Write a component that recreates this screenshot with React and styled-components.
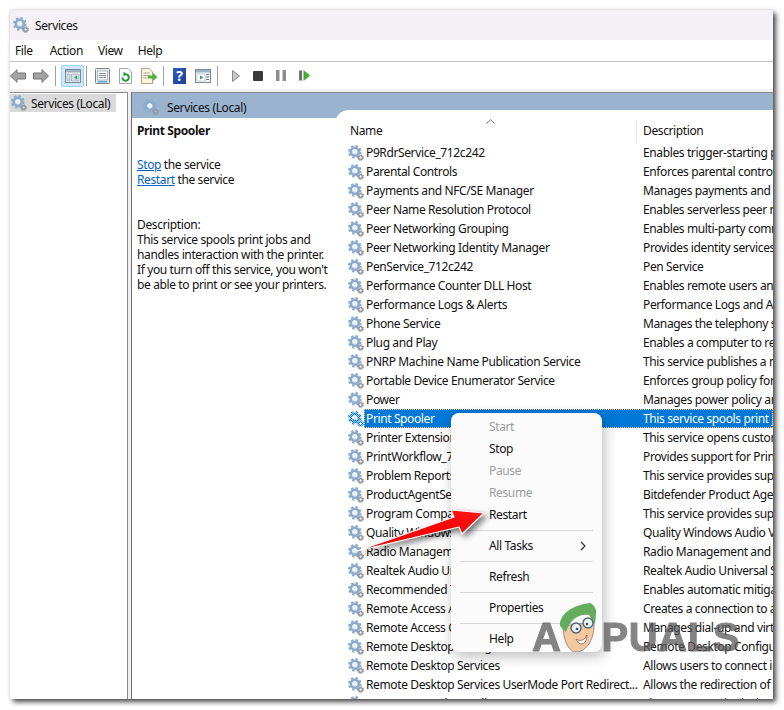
import React from 'react';
import styled, { createGlobalStyle } from 'styled-components';

const services = [
  ['P9RdrService_712c242', 'Enables trigger-starting processes'],
  ['Parental Controls', 'Enforces parental controls'],
  ['Payments and NFC/SE Manager', 'Manages payments and NFC'],
  ['Peer Name Resolution Protocol', 'Enables serverless peer name'],
  ['Peer Networking Grouping', 'Enables multi-party communication'],
  ['Peer Networking Identity Manager', 'Provides identity services'],
  ['PenService_712c242', 'Pen Service'],
  ['Performance Counter DLL Host', 'Enables remote users and'],
  ['Performance Logs & Alerts', 'Performance Logs and Alerts'],
  ['Phone Service', 'Manages the telephony state'],
  ['Plug and Play', 'Enables a computer to recognize'],
  ['PNRP Machine Name Publication Service', 'This service publishes a machine'],
  ['Portable Device Enumerator Service', 'Enforces group policy for'],
  ['Power', 'Manages power policy and'],
  ['Print Spooler', 'This service spools print jobs'],
  ['Printer Extensions and Notifications', 'This service opens custom'],
  ['PrintWorkflow_712c242', 'Provides support for Print'],
  ['Problem Reports Control Panel Support', 'This service provides support'],
  ['ProductAgentService', 'Bitdefender Product Agent'],
  ['Program Compatibility Assistant Service', 'This service provides support'],
  ['Quality Windows Audio Video Experience', 'Quality Windows Audio Video'],
  ['Radio Management Service', 'Radio Management and'],
  ['Realtek Audio Universal Service', 'Realtek Audio Universal Service'],
  ['Recommended Troubleshooting Service', 'Enables automatic mitigation'],
  ['Remote Access Auto Connection Manager', 'Creates a connection to a'],
  ['Remote Access Connection Manager', 'Manages dial-up and virtual'],
  ['Remote Desktop Configuration', 'Remote Desktop Configuration'],
  ['Remote Desktop Services', 'Allows users to connect interactively'],
  ['Remote Desktop Services UserMode Port Redirect...', 'Allows the redirection of printers'],
  ['Remote Procedure Call (RPC)', 'The RPCSS service is the'],
];

const Gear = ({ selected, id }) => {
  const big = selected ? `url(#${id})` : '#8dabca';
  const small = selected ? `url(#${id})` : '#949aa2';
  return (
    <GearSvg viewBox="0 0 16 16">
      {selected && (
        <defs>
          <pattern id={id} width="2" height="2" patternUnits="userSpaceOnUse">
            <rect width="2" height="2" fill="#9cc9ee" />
            <rect width="1" height="1" fill="#0078d7" />
            <rect x="1" y="1" width="1" height="1" fill="#0078d7" />
          </pattern>
        </defs>
      )}
      <circle cx="6.8" cy="6.8" r="5.7" fill="none" stroke={big} strokeWidth="2.2" strokeDasharray="2.4 2.08" />
      <circle cx="6.8" cy="6.8" r="3.9" fill="none" stroke={big} strokeWidth="2.8" />
      <circle cx="6.8" cy="6.8" r="2.6" fill={selected ? '#e6f1fb' : '#edf3f9'} />
      <path d="M4.6 8a2.6 2.6 0 0 0 3.6 1" fill="none" stroke={selected ? '#0078d7' : '#b4c7da'} strokeWidth="0.8" />
      <circle cx="12.6" cy="12.6" r="1.9" fill="none" stroke={small} strokeWidth="1.6" />
      <circle cx="12.6" cy="12.6" r="3" fill="none" stroke={small} strokeWidth="1" strokeDasharray="1.2 1.15" />
    </GearSvg>
  );
};

const ArrowLeft = () => (
  <ToolSvg $w={16} viewBox="0 0 16 14">
    <path d="M0.5 7 L7 0.7 V4 H15.5 V10 H7 V13.3 Z" fill="#a3a3a3" stroke="#747474" />
  </ToolSvg>
);

const ArrowRight = () => (
  <ToolSvg $w={16} viewBox="0 0 16 14">
    <path d="M15.5 7 L9 0.7 V4 H0.5 V10 H9 V13.3 Z" fill="#a3a3a3" stroke="#747474" />
  </ToolSvg>
);

const PanelIcon = ({ inner }) => (
  <ToolSvg $w={16} viewBox="0 0 16 14">
    <rect x="0.5" y="0.5" width="15" height="13" fill="#f6f6f6" stroke="#7d8a96" />
    <rect x="1" y="1" width="14" height="2.5" fill="#9fb2c4" />
    {inner}
  </ToolSvg>
);

const SheetIcon = () => (
  <ToolSvg $w={15} viewBox="0 0 15 16">
    <rect x="0.5" y="0.5" width="14" height="15" rx="1" fill="#eceff2" stroke="#7d8288" />
    <rect x="2.5" y="3" width="10" height="9" fill="#fff" stroke="#9aa4ad" strokeWidth="0.8" />
    <path d="M4 5.5h7M4 7.5h7M4 9.5h7" stroke="#7f8a94" strokeWidth="0.9" />
    <rect x="3" y="13" width="9" height="1.5" fill="#5aa7e0" />
  </ToolSvg>
);

const RefreshIcon = () => (
  <ToolSvg $w={13} viewBox="0 0 13 16">
    <path d="M0.5 0.5H9L12.5 4V15.5H0.5Z" fill="#fbfbfb" stroke="#a5a5a5" />
    <path d="M3.4 9.5a3.2 3.2 0 1 0 3.2-3.2" fill="none" stroke="#1f9c3c" strokeWidth="2" />
    <path d="M4.5 3.8L8 6.3L4.5 8.6Z" fill="#1f9c3c" />
  </ToolSvg>
);

const ExportIcon = () => (
  <ToolSvg $w={17} viewBox="0 0 17 16">
    <path d="M0.5 0.5H8L11.5 4V15.5H0.5Z" fill="#fdf6dc" stroke="#a8a08a" />
    <path d="M2.5 5h6M2.5 7.5h6M2.5 10h4" stroke="#6d6d6d" strokeWidth="0.9" strokeDasharray="1 0.6" />
    <path d="M7 7.5H12V5L16.5 9L12 13V10.5H7Z" fill="#52b33a" />
  </ToolSvg>
);

const ResumeIcon = () => (
  <ToolSvg $w={11} viewBox="0 0 11 11">
    <rect x="0" y="0.5" width="3" height="10" fill="#6f6f6f" />
    <path d="M4.5 0L11 5.5L4.5 11Z" fill="#3dae2b" />
  </ToolSvg>
);

const Mascot = () => (
  <MascotSvg viewBox="0 0 40 50">
    <path d="M4 24 C4 40 11 50 17 50 C28 50 36 36 35 20 Z" fill="#f4c9a0" stroke="#7a7a7a" strokeWidth="0.8" />
    <path d="M1 24 C0 12 14 3 31 1 C35 3 38 7 37 12 L36 22 L30 13 C22 12 12 15 7 30 Z" fill="#63ad5c" />
    <circle cx="17" cy="26" r="5" fill="#e8f2f7" stroke="#50646f" strokeWidth="1.4" />
    <circle cx="29" cy="21" r="5" fill="#e8f2f7" stroke="#50646f" strokeWidth="1.4" />
    <circle cx="18" cy="27" r="1.3" fill="#36576b" />
    <circle cx="28" cy="22" r="1.3" fill="#36576b" />
    <path d="M17 37 C21 40 26 38 28 33 C28 43 20 45 17 37Z" fill="#fff" stroke="#8a4a35" strokeWidth="0.8" />
  </MascotSvg>
);

const RedArrow = () => (
  <ArrowSvg viewBox="0 0 140 50">
    <defs>
      <linearGradient id="redFade" x1="0" y1="1" x2="1" y2="0">
        <stop offset="0" stopColor="#e01010" />
        <stop offset="0.6" stopColor="#f00" />
        <stop offset="1" stopColor="#ff1a1a" />
      </linearGradient>
    </defs>
    <path d="M2 45 L99 11 L96 4 L129 7 L107 28 L104 21 Z" fill="url(#redFade)" stroke="#fff" strokeWidth="1.2" strokeLinejoin="round" />
  </ArrowSvg>
);

export default function App() {
  return (
    <Page>
      <GlobalStyle />
      <Window>
        <TitleBar>
          <Gear />
          <span>Services</span>
        </TitleBar>
        <MenuBar>
          <span>File</span>
          <span>Action</span>
          <span>View</span>
          <span>Help</span>
        </MenuBar>
        <Toolbar>
          <ToolGroup $gap={7}>
            <ArrowLeft />
            <ArrowRight />
          </ToolGroup>
          <ToolSep $l={6} $r={5} />
          <ActiveTool>
            <PanelIcon inner={<><path d="M2 5h3v7H2zM6.5 5h7.5v7H6.5z" fill="#cfe0ef" stroke="#7d8a96" strokeWidth="0.5" /><path d="M12 6.5v4l-3-2z" fill="#2aa23a" /></>} />
          </ActiveTool>
          <ToolSep $l={2} $r={8} />
          <ToolGroup $gap={9}>
            <SheetIcon />
            <RefreshIcon />
            <ExportIcon />
          </ToolGroup>
          <ToolSep $l={5} $r={9} />
          <ToolGroup $gap={9}>
            <HelpBox>?</HelpBox>
            <PanelIcon inner={<><path d="M2 5h8v7H2z" fill="#fff" stroke="#9aa4ad" strokeWidth="0.5" /><path d="M5 6.5v4l3-2z" fill="#2aa23a" /><path d="M11 5.5h3M11 8h3M11 10.5h3" stroke="#5a7fa6" strokeWidth="1.2" /></>} />
          </ToolGroup>
          <ToolSep $l={6} $r={14} />
          <ToolGroup $gap={13}>
            <ToolSvg $w={8} viewBox="0 0 8 12"><path d="M0.5 0.5L7.5 6L0.5 11.5Z" fill="#c8c8c8" stroke="#8a8a8a" /></ToolSvg>
            <StopSquare />
            <ToolSvg $w={10} viewBox="0 0 10 11"><rect width="3.5" height="11" fill="#8d8d8d" /><rect x="6.5" width="3.5" height="11" fill="#8d8d8d" /></ToolSvg>
            <ResumeIcon />
          </ToolGroup>
        </Toolbar>
        <Body>
          <TreePane>
            <TreeItem>
              <Gear />
              <span>Services (Local)</span>
            </TreeItem>
          </TreePane>
          <MainPane>
            <PaneHeader>
              <Gear />
              <span>Services (Local)</span>
            </PaneHeader>
            <PaneContent>
              <Details>
                <DetailTitle>Print Spooler</DetailTitle>
                <DetailActions>
                  <div><DetailLink>Stop</DetailLink> the service</div>
                  <div><DetailLink>Restart</DetailLink> the service</div>
                </DetailActions>
                <div>Description:</div>
                <div>
                  This service spools print jobs and<br />
                  handles interaction with the printer.<br />
                  If you turn off this service, you won't<br />
                  be able to print or see your printers.
                </div>
              </Details>
              <List>
                <ListHeader>
                  <NameHeader>
                    Name
                    <SortCaret viewBox="0 0 9 5"><path d="M0.5 4.5L4.5 0.8L8.5 4.5" fill="none" stroke="#777" /></SortCaret>
                  </NameHeader>
                  <DescHeader>Description</DescHeader>
                </ListHeader>
                {services.map(([name, desc], i) => {
                  const selected = name === 'Print Spooler';
                  return (
                    <Row key={name}>
                      <Gear selected={selected} id={`dither-${i}`} />
                      <RowBody $selected={selected}>
                        <NameCell>{name}</NameCell>
                        <DescCell>{desc}</DescCell>
                      </RowBody>
                    </Row>
                  );
                })}
              </List>
            </PaneContent>
          </MainPane>
        </Body>

        <ContextMenu>
          <MenuItem $disabled>Start</MenuItem>
          <MenuItem>Stop</MenuItem>
          <MenuItem $disabled>Pause</MenuItem>
          <MenuItem $disabled>Resume</MenuItem>
          <MenuItem>Restart</MenuItem>
          <MenuSep />
          <MenuItem>
            All Tasks
            <SubCaret viewBox="0 0 6 10"><path d="M1 1L5 5L1 9" fill="none" stroke="#333" strokeWidth="1.2" /></SubCaret>
          </MenuItem>
          <MenuSep />
          <MenuItem>Refresh</MenuItem>
          <MenuSep />
          <MenuItem>Properties</MenuItem>
          <MenuSep />
          <MenuItem>Help</MenuItem>
        </ContextMenu>
        <RedArrow />
        <Watermark>
          <WatermarkText>A</WatermarkText>
          <Mascot />
          <WatermarkText>PUALS</WatermarkText>
        </Watermark>
      </Window>
    </Page>
  );
}

const GlobalStyle = createGlobalStyle`
  html, body {
    margin: 0;
    padding: 0;
    background: #fff;
  }
`;

const Page = styled.div`
  width: 784px;
  height: 710px;
  padding: 10px 11px 11px 10px;
  box-sizing: border-box;
  overflow: hidden;
  font-family: "Noto Sans", sans-serif;
  font-size: 12px;
  letter-spacing: -0.38px;
  color: #111;
`;

const Window = styled.div`
  position: relative;
  height: 689px;
  display: flex;
  flex-direction: column;
  background: #f0f0f0;
  box-shadow: 3px 3px 5px rgba(0, 0, 0, 0.7), 0 0 3px rgba(0, 0, 0, 0.12);
`;

const TitleBar = styled.div`
  height: 30px;
  flex: none;
  display: flex;
  align-items: center;
  gap: 6px;
  padding-left: 3px;
  background: #f3f0f6;
  font-size: 12px;
`;

const MenuBar = styled.div`
  height: 22px;
  flex: none;
  display: flex;
  align-items: center;
  gap: 15px;
  padding-left: 5px;
  background: #fff;
  border-bottom: 1px solid #c4c4c4;
  box-sizing: border-box;

  span:first-child {
    margin-right: 2px;
  }
`;

const Toolbar = styled.div`
  height: 27px;
  flex: none;
  display: flex;
  align-items: center;
  background: #fff;
`;

const ToolSvg = styled.svg`
  width: ${(p) => p.$w}px;
  flex: none;
`;

const ToolSep = styled.div`
  width: 1px;
  height: 20px;
  flex: none;
  margin: 0 ${(p) => p.$r}px 0 ${(p) => p.$l}px;
  background: #a0a0a0;
`;

const ActiveTool = styled.div`
  width: 23px;
  height: 22px;
  flex: none;
  display: flex;
  align-items: center;
  justify-content: center;
  box-sizing: border-box;
  background: #cce8ff;
  border: 1px solid #99d1ff;
  border-radius: 2px;
`;

const ToolGroup = styled.div`
  display: flex;
  align-items: center;
  gap: ${(p) => p.$gap}px;
`;

const StopSquare = styled.div`
  width: 10px;
  height: 10px;
  background: #3a3a3a;
  border-radius: 1px;
`;

const HelpBox = styled.div`
  width: 13px;
  height: 16px;
  display: flex;
  align-items: center;
  justify-content: center;
  background: linear-gradient(135deg, #2f5cc0, #1d3f94);
  color: #fff;
  font-size: 14px;
  font-weight: 700;
  letter-spacing: 0;
`;

const Body = styled.div`
  flex: 1;
  min-height: 0;
  display: flex;
  gap: 3px;
  padding-top: 3px;
`;

const TreePane = styled.div`
  width: 118px;
  flex: none;
  box-sizing: border-box;
  background: #fff;
  border-top: 1px solid #8a8a8a;
  border-right: 1px solid #8a8a8a;
  padding-top: 1px;
`;

const TreeItem = styled.div`
  width: 106px;
  height: 18px;
  display: flex;
  align-items: center;
  gap: 4px;
  padding-left: 1px;
  box-sizing: border-box;
  background: #d9d9d9;
`;

const MainPane = styled.div`
  flex: 1;
  min-width: 0;
  display: flex;
  flex-direction: column;
  background: #fff;
  border-left: 1px solid #6e6e6e;
  border-top: 1px solid #8a8a8a;
`;

const PaneHeader = styled.div`
  height: 25px;
  flex: none;
  display: flex;
  align-items: center;
  gap: 8px;
  padding: 3px 0 0 11px;
  box-sizing: border-box;
  background: #9ab4d0;
`;

const PaneContent = styled.div`
  flex: 1;
  min-height: 0;
  display: flex;
`;

const Details = styled.div`
  width: 203px;
  flex: none;
  padding: 5px 0 0 5px;
  box-sizing: border-box;
  line-height: 15px;
`;

const DetailTitle = styled.div`
  font-weight: 700;
  height: 34px;
`;

const DetailActions = styled.div`
  height: 60px;
`;

const DetailLink = styled.a`
  color: #0563c1;
  text-decoration: underline;
`;

const List = styled.div`
  flex: 1;
  min-width: 0;
  margin-top: -8px;
  background: #fff;
  border-top-left-radius: 14px;
  overflow: hidden;
  position: relative;
  z-index: 1;
`;

const ListHeader = styled.div`
  height: 33px;
  display: flex;
  align-items: flex-end;
`;

const NameHeader = styled.div`
  position: relative;
  width: 287px;
  height: 23px;
  margin-left: 15px;
  padding-top: 2px;
  box-sizing: border-box;
  border-right: 1px solid #e5e5e5;
`;

const SortCaret = styled.svg`
  position: absolute;
  left: 136px;
  top: -1px;
  width: 9px;
  height: 5px;
`;

const DescHeader = styled.div`
  height: 23px;
  padding: 2px 0 0 6px;
  box-sizing: border-box;
`;

const Row = styled.div`
  height: 19px;
  display: flex;
  align-items: center;
  padding-left: 13px;
  white-space: nowrap;
`;

const GearSvg = styled.svg`
  width: 16px;
  height: 16px;
  flex: none;
`;

const RowBody = styled.div`
  flex: 1;
  min-width: 0;
  height: 19px;
  display: flex;
  align-items: center;
  padding-left: 2px;
  background: ${(p) => (p.$selected ? '#0078d7' : 'transparent')};
  color: ${(p) => (p.$selected ? '#fff' : 'inherit')};
  outline: ${(p) => (p.$selected ? '1px dotted #ffc77a' : 'none')};
  outline-offset: -1px;
`;

const NameCell = styled.div`
  width: 277px;
  flex: none;
`;

const DescCell = styled.div`
  flex: 1;
`;

const ContextMenu = styled.div`
  position: absolute;
  left: 441px;
  top: 403px;
  width: 151px;
  z-index: 3;
  padding: 3px 0 2px;
  box-sizing: border-box;
  background: #fbfbfb;
  border-radius: 8px;
  box-shadow: 2px 4px 14px rgba(0, 0, 0, 0.28);
`;

const MenuItem = styled.div`
  position: relative;
  height: 22px;
  line-height: 22px;
  padding-left: 38px;
  color: ${(p) => (p.$disabled ? '#9d9d9d' : '#111')};
`;

const SubCaret = styled.svg`
  position: absolute;
  right: 16px;
  top: 6px;
  width: 6px;
  height: 10px;
`;

const MenuSep = styled.div`
  height: 1px;
  margin: 4px 9px;
  background: #d6d6d6;
`;

const ArrowSvg = styled.svg`
  position: absolute;
  left: 345px;
  top: 496px;
  width: 140px;
  height: 50px;
  z-index: 4;
  filter: drop-shadow(3px 3px 3px rgba(0, 0, 0, 0.55));
`;

const Watermark = styled.div`
  position: absolute;
  left: 522px;
  top: 592px;
  z-index: 5;
  display: flex;
  align-items: flex-end;
  height: 50px;
  pointer-events: none;
`;

const WatermarkText = styled.span`
  font-family: "Liberation Sans", sans-serif;
  font-weight: 700;
  font-size: 40px;
  line-height: 30px;
  letter-spacing: 0.6px;
  color: #555;
  opacity: 0.72;
  -webkit-text-stroke: 1px #555;
`;

const MascotSvg = styled.svg`
  width: 40px;
  height: 50px;
  flex: none;
  margin: 0 3px 0 -3px;
`;
